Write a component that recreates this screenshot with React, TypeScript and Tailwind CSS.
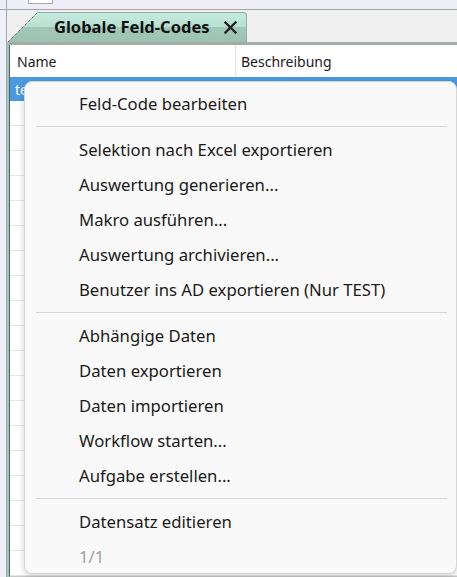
import React from 'react';

type MenuEntry = { label: string; disabled?: boolean } | 'sep';

const MENU: MenuEntry[] = [
  { label: 'Feld-Code bearbeiten' },
  'sep',
  { label: 'Selektion nach Excel exportieren' },
  { label: 'Auswertung generieren...' },
  { label: 'Makro ausführen...' },
  { label: 'Auswertung archivieren...' },
  { label: 'Benutzer ins AD exportieren (Nur TEST)' },
  'sep',
  { label: 'Abhängige Daten' },
  { label: 'Daten exportieren' },
  { label: 'Daten importieren' },
  { label: 'Workflow starten...' },
  { label: 'Aufgabe erstellen...' },
  'sep',
  { label: 'Datensatz editieren' },
  { label: '1/1', disabled: true },
];

const ROWS = Array.from({ length: 19 });

// ── Tab header with slanted left edge ─────────────────────────────────────────
function DocTab({ title }: { title: string }) {
  return (
    <div className="flex items-end h-[32px]">
      <svg width="31" height="30" viewBox="0 0 31 30" className="block">
        <defs>
          <linearGradient id="tabfill" x1="0" y1="0" x2="0" y2="1">
            <stop offset="0" stopColor="#c4ede1" />
            <stop offset="0.5" stopColor="#b6dfd0" />
            <stop offset="0.5" stopColor="#a2c8b9" />
            <stop offset="1" stopColor="#9cc2b3" />
          </linearGradient>
        </defs>
        <polygon points="1,30 31,0 31,30" fill="url(#tabfill)" />
        <line x1="1" y1="30" x2="31" y2="0" stroke="#4a4a4a" strokeWidth="1" strokeDasharray="1 1" />
      </svg>
      <div className="h-[30px] w-[209px] flex items-center rounded-tr-[4px] border-t border-r border-[#9aa8a2] bg-[linear-gradient(to_bottom,#c4ede1_0%,#b6dfd0_50%,#a2c8b9_50%,#9cc2b3_100%)]">
        <span className="ml-[16px] text-[16.5px] font-bold text-[#111]">{title}</span>
        <svg className="ml-auto mr-[9px]" width="13" height="13" viewBox="0 0 13 13">
          <path d="M1.5 1.5 L11.5 11.5 M11.5 1.5 L1.5 11.5" stroke="#222" strokeWidth="2.4" strokeLinecap="square" />
        </svg>
      </div>
    </div>
  );
}

// ── Context menu ──────────────────────────────────────────────────────────────
function ContextMenu() {
  return (
    <div className="absolute left-[24px] top-[81px] w-[433px] h-[493px] overflow-hidden rounded-[8px] bg-[#f9f9f9] border border-[#d6d6d6] shadow-[0_2px_6px_rgba(0,0,0,0.18)] pt-[4px]">
      {MENU.map((item, i) =>
        item === 'sep' ? (
          <div key={i} className="h-[11px] flex items-center pl-[11px] pr-[9px]">
            <div className="h-px w-full bg-[#d5d5d5]" />
          </div>
        ) : (
          <div
            key={i}
            className={
              item.disabled
                ? 'h-[35px] flex items-center pl-[54px] text-[16.7px] text-[#a0a0a0]'
                : 'h-[35px] flex items-center pl-[54px] text-[16.7px] text-[#1a1a1a]'
            }
          >
            {item.label}
          </div>
        )
      )}
    </div>
  );
}

export default function App() {
  return (
    <div className="relative w-[457px] h-[577px] overflow-hidden bg-[#f0f0f0] font-['Noto_Sans',_'Open_Sans',_sans-serif] flex flex-col">
      {/* window strip above the tab bar */}
      <div className="h-[10px] shrink-0 flex bg-[#eeeef8] border-b border-[#a4a4a4]">
        <div className="w-[7px] border-r border-[#a0a4b4]" />
        <div className="ml-[21px] w-[25px] h-[4px] bg-white border border-t-0 border-[#a8a8a8]" />
      </div>

      <div className="flex-1 flex min-h-0">
        <div className="w-[7px] shrink-0 bg-[#eef0fa] border-r border-[#a0a4b4]" />

        <div className="flex-1 flex flex-col min-w-0">
          <DocTab title="Globale Feld-Codes" />

          {/* tab content frame */}
          <div className="flex-1 flex flex-col border-l-2 border-[#9ccab8] min-h-0">
            <div className="h-[3px] bg-[#a3aaa7]" />
            <div className="flex-1 flex flex-col border-l border-[#5c5c5c] bg-white min-h-0 border-b border-b-[#c8c8c8]">
              <div className="h-[32px] shrink-0 flex text-[14px] text-[#1a1a1a]">
                <div className="w-[226px] flex items-center pl-[7px] border-r border-[#e2e2e2]">Name</div>
                <div className="flex items-center pl-[5px]">Beschreibung</div>
              </div>
              <div className="h-[24px] shrink-0 flex items-center bg-[#4a9ae2] text-white text-[14px] pl-[5px]">
                test
              </div>
              <div className="flex-1 overflow-hidden">
                {ROWS.map((_, i) => (
                  <div key={i} className="h-[25px] border-b border-[#e6e6e6]" />
                ))}
              </div>
            </div>
          </div>
        </div>
      </div>

      <ContextMenu />
    </div>
  );
}
